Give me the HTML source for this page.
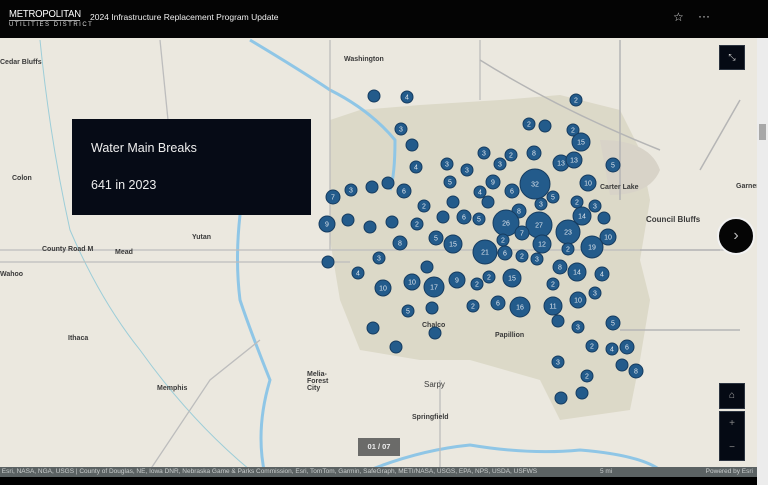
<!DOCTYPE html>
<html><head><meta charset="utf-8"><style>
html,body{margin:0;padding:0;width:768px;height:485px;overflow:hidden;background:#000;font-family:"Liberation Sans",sans-serif}
#hdr{position:absolute;left:0;top:0;width:768px;height:38px;background:#040404;color:#fff}
#map{position:absolute;left:0;top:38px;width:757px;height:439px;background:#ebe8df;overflow:hidden}
#sb{position:absolute;left:757px;top:38px;width:11px;height:447px;background:#ececec}
#sb div{position:absolute;left:2px;top:86px;width:7px;height:16px;background:#a8a8a8}
.lbl{position:absolute;font-size:7px;font-weight:bold;color:#3a3a3a}
.btn{position:absolute;background:#050a14;border:1px solid #2c3440}
</style></head><body>
<div id="hdr">
 <div style="position:absolute;left:9px;top:9px;font-size:10px;letter-spacing:-0.2px;transform:scaleX(0.95);transform-origin:left">METROPOLITAN</div>
 <div style="position:absolute;left:9px;top:20px;width:71px;border-top:1px solid #aaa"></div>
 <div style="position:absolute;left:9px;top:22px;font-size:6px;letter-spacing:1.5px;color:#ddd">UTILITIES DISTRICT</div>
 <div style="position:absolute;left:90px;top:12px;font-size:8.5px;color:#eee">2024 Infrastructure Replacement Program Update</div>
 <div style="position:absolute;left:673px;top:10px;font-size:12px;color:#ddd">☆</div>
 <div style="position:absolute;left:698px;top:9px;font-size:12px;color:#ddd">···</div>
</div>
<div id="map">
<svg width="757" height="439" style="position:absolute;left:0;top:0">
 <g transform="translate(0,-38)">
 <path d="M330 120 L360 110 L420 105 L500 100 L560 95 L620 110 L640 150 L650 200 L640 260 L650 300 L640 360 L630 410 L560 420 L540 380 L470 360 L420 360 L360 350 L340 300 L330 240 Z" fill="#dcd9c8"/>
 <path d="M600 140 Q650 140 660 170 Q650 195 610 195 Z" fill="#d8d3c8"/>
 <path d="M250 40 Q300 70 330 90 Q370 110 395 140 Q395 175 390 190" stroke="#8fc6e6" stroke-width="3" fill="none"/>
 <path d="M240 215 Q235 260 240 300 Q250 330 270 380 Q255 430 265 475" stroke="#8fc6e6" stroke-width="3" fill="none"/>
 <path d="M370 470 Q420 450 470 445 Q530 455 580 450 Q640 455 660 470" stroke="#8fc6e6" stroke-width="3" fill="none"/>
 <path d="M40 40 Q50 140 70 230 Q100 300 140 350 Q190 420 250 470" stroke="#9ccdd8" stroke-width="1" fill="none"/>
 <path d="M0 250 L740 250 M0 262 L350 262 M330 40 L330 250 M480 40 L480 100 M160 40 L170 140 M260 340 L210 380 L150 470 M440 380 L440 470" stroke="#bdbdbd" stroke-width="1.3" fill="none"/>
 <path d="M480 60 Q560 110 660 150 M620 40 L620 200 M640 250 L720 250 M700 170 L740 100 M620 330 L740 330" stroke="#b5b5b5" stroke-width="1.5" fill="none"/>
 </g>
</svg>
<div class="lbl" style="left:0;top:21px">Cedar Bluffs</div>
<div class="lbl" style="left:344px;top:18px">Washington</div>
<div class="lbl" style="left:12px;top:137px">Colon</div>
<div class="lbl" style="left:42px;top:208px">County Road M</div>
<div class="lbl" style="left:115px;top:211px">Mead</div>
<div class="lbl" style="left:192px;top:196px">Yutan</div>
<div class="lbl" style="left:68px;top:297px">Ithaca</div>
<div class="lbl" style="left:157px;top:347px">Memphis</div>
<div class="lbl" style="left:307px;top:333px">Melia-<br>Forest<br>City</div>
<div class="lbl" style="left:424px;top:342px;font-weight:normal;font-size:8px">Sarpy</div>
<div class="lbl" style="left:412px;top:376px">Springfield</div>
<div class="lbl" style="left:495px;top:294px">Papillion</div>
<div class="lbl" style="left:600px;top:146px">Carter Lake</div>
<div class="lbl" style="left:646px;top:177px;font-size:8px">Council Bluffs</div>
<div class="lbl" style="left:736px;top:145px">Garner</div>
<div class="lbl" style="left:0;top:233px">Wahoo</div>
<div class="lbl" style="left:422px;top:284px">Chalco</div>
<svg id="c" width="757" height="439" style="position:absolute;left:0;top:0"></svg>
<div style="position:absolute;left:72px;top:81px;width:239px;height:96px;background:#060b16;color:#eee;font-size:12.5px">
 <div style="position:absolute;left:19px;top:22px">Water Main Breaks</div>
 <div style="position:absolute;left:19px;top:59px">641 in 2023</div>
</div>
<div class="btn" style="left:719px;top:7px;width:24px;height:23px;color:#ccc;font-size:9px;text-align:center;line-height:23px">⤡</div>
<div style="position:absolute;left:717px;top:179px;width:34px;height:34px;border-radius:50%;background:#050505;border:2px solid #f2f2f2;color:#bbb;text-align:center;line-height:33px;font-size:16px">›</div>
<div class="btn" style="left:719px;top:345px;width:24px;height:24px;color:#aaa;font-size:10px;text-align:center;line-height:24px">⌂</div>
<div class="btn" style="left:719px;top:373px;width:24px;height:48px;color:#888;font-size:10px;text-align:center;line-height:24px">+<br>−</div>
<div style="position:absolute;left:358px;top:400px;width:42px;height:18px;background:#6b6b69;color:#eee;font-size:7.5px;font-weight:bold;text-align:center;line-height:18px">01 / 07</div>
<div style="position:absolute;left:0;top:429px;width:757px;height:10px;background:#5b6263;color:#c9cdcd;font-size:6.5px;line-height:10px;white-space:nowrap">&nbsp;Esri, NASA, NGA, USGS | County of Douglas, NE, Iowa DNR, Nebraska Game &amp; Parks Commission, Esri, TomTom, Garmin, SafeGraph, METI/NASA, USGS, EPA, NPS, USDA, USFWS<span style="position:absolute;left:600px">5 mi</span><span style="position:absolute;right:4px">Powered by Esri</span></div>
</div>
<div id="sb"><div></div></div>
<script>
var d=[[374,96,6,''],[407,97,6,'4'],[576,100,6,'2'],[401,129,6,'3'],[529,124,6,'2'],[545,126,6,''],[573,130,6,'2'],[581,142,9,'15'],[412,145,6,''],[416,167,6,'4'],[388,183,6,''],[404,191,7,'6'],[372,187,6,''],[351,190,6,'3'],[333,197,7,'7'],[327,224,8,'9'],[348,220,6,''],[370,227,6,''],[392,222,6,''],[424,206,6,'2'],[417,224,6,'2'],
[484,153,6,'3'],[511,155,6,'2'],[534,153,7,'8'],[447,164,6,'3'],[467,170,6,'3'],[500,164,6,'3'],[561,163,8,'13'],[574,160,8,'13'],[613,165,7,'5'],[450,182,6,'5'],[493,182,7,'9'],[535,184,15,'32'],[588,183,8,'10'],[480,192,6,'4'],[512,191,7,'6'],[553,197,6,'5'],[453,202,6,''],[488,202,6,''],[519,211,7,'8'],[541,204,6,'3'],[577,202,6,'2'],[595,206,6,'3'],[443,217,6,''],[464,217,7,'6'],[479,219,6,'5'],[506,223,13,'26'],[539,225,13,'27'],[582,216,9,'14'],[604,218,6,''],[522,233,7,'7'],[568,232,12,'23'],[608,237,8,'10'],[453,244,9,'15'],[503,240,6,'2'],[542,244,9,'12'],[485,252,12,'21'],[505,253,7,'6'],[568,249,6,'2'],[592,247,11,'19'],[522,256,6,'2'],[537,259,6,'3'],[560,267,7,'8'],[577,272,9,'14'],[602,274,7,'4'],[457,280,8,'9'],[477,284,6,'2'],[489,277,6,'2'],[512,278,9,'15'],[553,284,6,'2'],[595,293,6,'3'],[473,306,6,'2'],[498,303,7,'6'],[520,307,10,'16'],[553,306,9,'11'],[578,300,8,'10'],
[400,243,7,'8'],[436,238,7,'5'],[379,258,6,'3'],[328,262,6,''],[358,273,6,'4'],[427,267,6,''],[383,288,8,'10'],[412,282,8,'10'],[434,287,10,'17'],[408,311,6,'5'],[432,308,6,''],[373,328,6,''],[435,333,6,''],[396,347,6,''],[558,321,6,''],[578,327,6,'3'],[613,323,7,'5'],[592,346,6,'2'],[612,349,6,'4'],[627,347,7,'6'],[558,362,6,'3'],[587,376,6,'2'],[622,365,6,''],[636,371,7,'8'],[561,398,6,''],[582,393,6,'']];
var s='';d.forEach(function(c){var y=c[1]-38;s+='<circle cx="'+c[0]+'" cy="'+y+'" r="'+c[2]+'" fill="#235b8b" stroke="#163c60" stroke-width="1"/>';if(c[3])s+='<text x="'+c[0]+'" y="'+(y+2.5)+'" fill="#dfe6ee" font-size="7" font-family="Liberation Sans" text-anchor="middle">'+c[3]+'</text>';});
document.getElementById('c').innerHTML=s;
</script>
</body></html>
